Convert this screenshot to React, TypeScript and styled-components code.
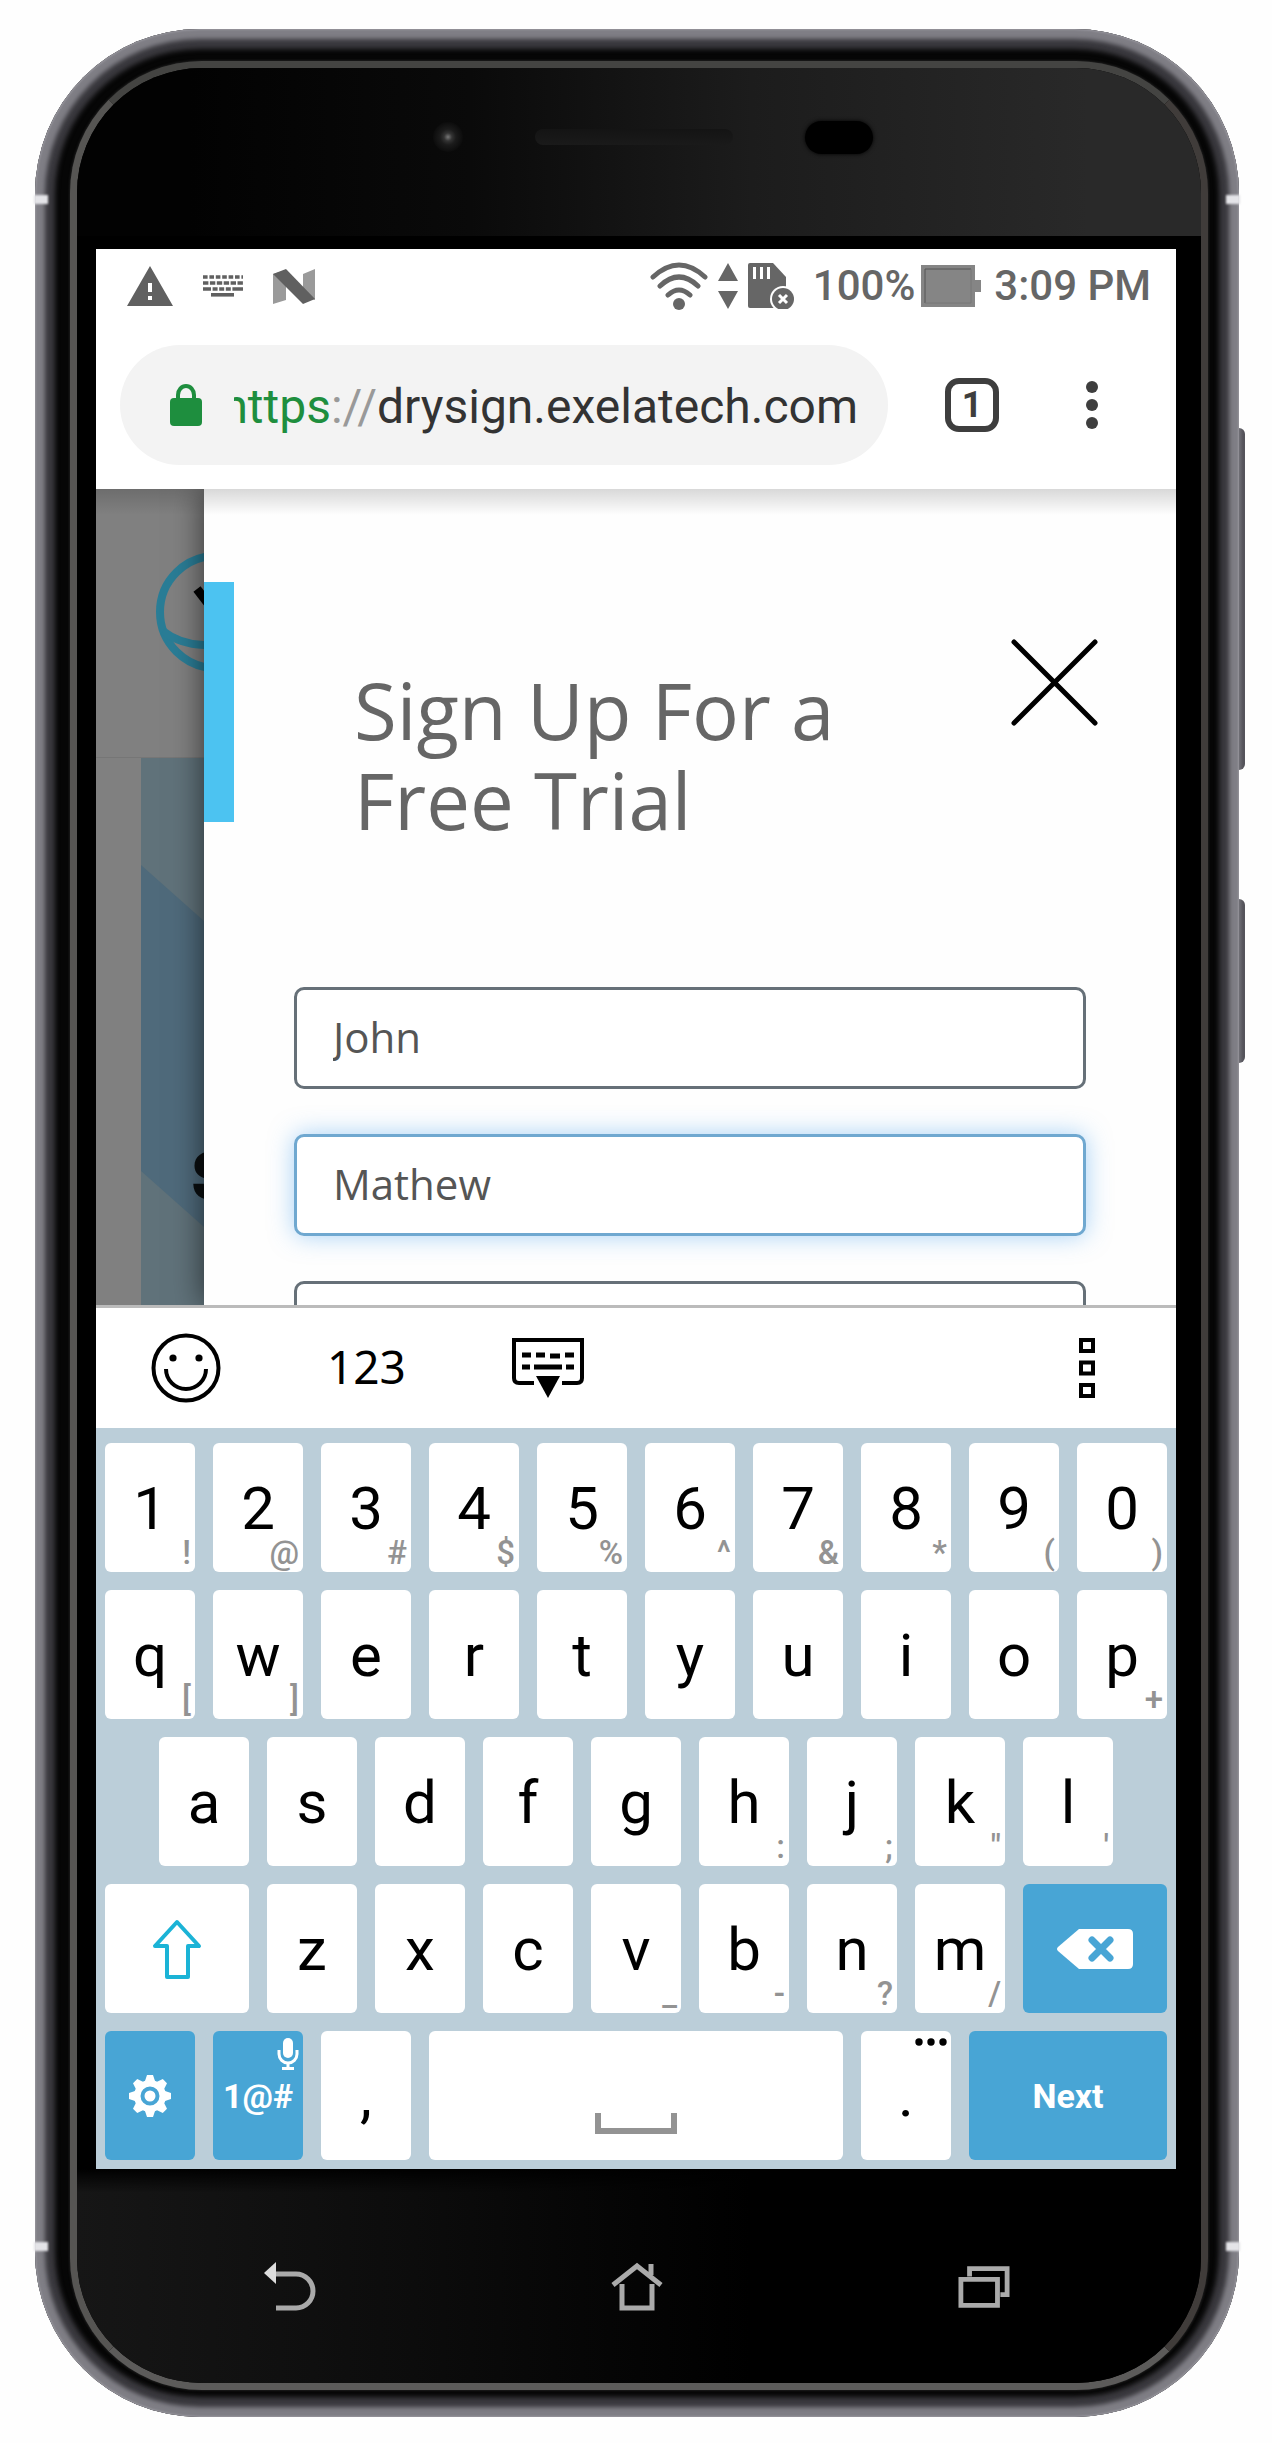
import React from "react";
import styled, { createGlobalStyle, css } from "styled-components";

const GlobalStyle = createGlobalStyle`
  *, *::before, *::after { box-sizing: border-box; }
  body { margin: 0; background: #fefefe; font-family: Roboto, "Liberation Sans", sans-serif; }
  button, input { font: inherit; margin: 0; }
  svg { display: block; }
`;

/* ---------- device shell ---------- */

const Page = styled.main`
  padding: 29px 33px 26px 35px;
`;

const Device = styled.div`
  position: relative;
  isolation: isolate;
`;

const SideButton = styled.span<{ $top: number; $length: number }>`
  position: absolute;
  z-index: -1;
  right: -6px;
  top: ${(p) => p.$top}px;
  width: 20px;
  height: ${(p) => p.$length}px;
  border-radius: 6px;
  background: linear-gradient(90deg, #9a9ba1 40%, #55545b 90%);
`;

const Antenna = styled.span<{ $side: "left" | "right"; $edge: "top" | "bottom" }>`
  position: absolute;
  ${(p) => p.$side}: -1px;
  ${(p) => p.$edge}: 166px;
  width: 14px;
  height: 9px;
  background: #e4e4e8;
  filter: blur(1px);
`;

const Metal = styled.div`
  padding: 32px 31px 27px 35px;
  border-radius: 165px;
  background: #060606;
  box-shadow: inset 0 0 2px 1px #98979e, inset 0 0 4px 10px #7f7e85,
    inset 0 0 5px 20px #3a393e;
`;

const Glass = styled.div`
  overflow: hidden;
  border: 7px solid;
  border-color: #444442 #403c3a #5c5b5a #565553;
  border-radius: 132px;
  background: #000;
  box-shadow: 0 0 3px #333;
`;

const TopBezel = styled.div`
  position: relative;
  display: flex;
  align-items: center;
  height: 168px;
  padding: 0 328px 30px 356px;
  background: linear-gradient(90deg, #020202 10%, #0a0a0a 35%, #1c1c1c 60%, #292929 90%);
`;

const Camera = styled.span`
  width: 30px;
  height: 30px;
  border-radius: 50%;
  background: radial-gradient(circle, #777 0, #333 4px, #1b1b1b 8px, #0c0c0c 15px);
`;

const Speaker = styled.span`
  flex: 1;
  height: 16px;
  margin: 0 72px;
  border-radius: 8px;
  background: linear-gradient(#141414, #1a1a1a);
`;

const Sensor = styled.span`
  width: 68px;
  height: 33px;
  border-radius: 17px;
  background: #000;
  box-shadow: 0 0 4px #000;
`;

const BottomBezel = styled.nav`
  display: flex;
  justify-content: center;
  gap: 295px;
  height: 214px;
  padding: 92px 4px 0 0;
  background: linear-gradient(#000 0, transparent 24px),
    linear-gradient(90deg, #161616, #0c0c0c 30%, #000 60%);
`;

const PlainButton = styled.button`
  display: flex;
  align-items: center;
  justify-content: center;
  padding: 0;
  border: 0;
  background: none;
  color: inherit;
`;

const NavButton = styled(PlainButton)`
  width: 52px;
  height: 52px;
  color: #aaa;
`;

const Screen = styled.div`
  margin: 13px 25px 0 19px;
  background: #fff;
`;

/* ---------- status and address bars ---------- */

const StatusBar = styled.div`
  display: flex;
  align-items: center;
  justify-content: space-between;
  height: 72px;
  padding: 2px 25px 0 31px;
  font-size: 42px;
  font-weight: 500;
  line-height: 48px;
  color: #666;
`;

const StatusGroup = styled.div<{ $gap: number }>`
  display: flex;
  align-items: center;
  gap: ${(p) => p.$gap}px;
`;

const BatteryLevel = styled.span`
  display: flex;
  align-items: center;
  gap: 6px;
  margin: 0 3px 0 9px;
`;

const AddressBar = styled.div`
  display: flex;
  align-items: center;
  height: 168px;
  padding: 24px 48px 24px 24px;
  color: #3e3e3e;
`;

const UrlPill = styled(PlainButton)`
  flex: 1;
  min-width: 0;
  justify-content: flex-start;
  gap: 32px;
  height: 120px;
  padding: 0 30px 0 50px;
  border-radius: 60px;
  background: #f3f3f3;
`;

const UrlText = styled.span`
  display: flex;
  flex: 1;
  min-width: 0;
  justify-content: flex-end;
  overflow: hidden;
  padding-top: 3px;
  font-size: 48px;
  line-height: 60px;
  color: #333;
`;

const Scheme = styled.span`
  color: #1e8e3e;
`;

const Slashes = styled.span`
  color: #999;
`;

const TabButton = styled(PlainButton)`
  width: 54px;
  height: 54px;
  margin: 0 57px;
  border: 6px solid #3e3e3e;
  border-radius: 14px;
  font-size: 36px;
  font-weight: 700;
  line-height: 42px;
`;

const MenuButton = styled(PlainButton)`
  width: 72px;
  height: 54px;
`;

/* ---------- web page ---------- */

const Viewport = styled.section`
  position: relative;
  display: flex;
  height: 816px;
  overflow: hidden;

  &::after {
    content: "";
    position: absolute;
    inset: 0 0 auto;
    z-index: 2;
    height: 26px;
    background: linear-gradient(rgba(0, 0, 0, 0.15), rgba(0, 0, 0, 0));
  }
`;

const DimmedPage = styled.div`
  width: 10%;
  overflow: hidden;
  background: #808080;
`;

const DimmedHeader = styled.div`
  height: 269px;
  padding: 62px 0 0 59px;
  border-bottom: 1px solid #767676;
`;

const DimmedHero = styled.div`
  position: relative;
  height: 547px;
  margin-left: 45px;
  padding: 382px 0 0 50px;
  background: #60727a;
  font-family: Inter, sans-serif;
  font-size: 64px;
  font-weight: 800;
  line-height: 72px;
  color: #0b0f11;

  &::before {
    content: "";
    position: absolute;
    inset: 107px 0 78px;
    background: #4f6a7b;
    clip-path: polygon(0 0, 100% 56px, 100% 100%, 0 calc(100% - 56px));
  }
`;

const HeroText = styled.span`
  position: relative;
`;

const Drawer = styled.div`
  position: relative;
  z-index: 1;
  flex: 1;
  padding-top: 93px;
  background: #fefefe;
  box-shadow: 0 0 30px rgba(0, 0, 0, 0.6);
`;

const DrawerHeader = styled.header`
  display: flex;
  align-items: flex-start;
  padding-right: 78px;
`;

const Accent = styled.span`
  width: 30px;
  height: 240px;
  background: #4cc3f1;
`;

const Title = styled.h1`
  flex: 1;
  margin: 83px 0 0 120px;
  font-family: "Open Sans", "Noto Sans", sans-serif;
  font-size: 78px;
  font-weight: 400;
  line-height: 90px;
  color: #666;
`;

const CloseButton = styled(PlainButton)`
  margin-top: 57px;
  color: #000;
`;

const Form = styled.form`
  display: grid;
  gap: 45px;
  margin: 142px 90px 0;
`;

const Field = styled.input<{ $active?: boolean }>`
  width: 100%;
  height: 102px;
  padding: 0 36px 4px;
  border: 3px solid #667078;
  border-radius: 10px;
  outline: 0;
  background: #fff;
  font-family: "Open Sans", "Noto Sans", sans-serif;
  font-size: 42px;
  color: #555;
  ${(p) =>
    p.$active &&
    css`
      border-color: #6fa8d0;
      box-shadow: 0 0 24px rgba(80, 165, 240, 0.5);
    `}
`;

/* ---------- keyboard ---------- */

const ToolRow = styled.div`
  display: flex;
  align-items: center;
  height: 123px;
  padding: 0 81px 0 55px;
  border-top: 3px solid #bbb;
  background: #fff;
  color: #000;
`;

const ToolButton = styled(PlainButton)<{ $push?: boolean }>`
  height: 72px;
  min-width: 70px;
  font-family: "Noto Sans", sans-serif;
  font-size: 46px;
  line-height: 60px;
  & + & {
    margin-left: 106px;
  }
  ${(p) =>
    p.$push &&
    css`
      && {
        min-width: 16px;
        margin-left: auto;
      }
    `}
`;

const ToolLabel = styled.span`
  padding-bottom: 4px;
`;

const Keyboard = styled.div`
  display: grid;
  gap: 18px;
  padding: 15px 0 9px;
  background: #bbced9;
`;

const KeyRow = styled.div<{ $indent?: boolean }>`
  display: grid;
  grid-template-columns: repeat(20, 1fr);
  ${(p) =>
    p.$indent &&
    css`
      & > :first-child {
        grid-column-start: 2;
      }
    `}
`;

const Key = styled(PlainButton)<{ $span?: number; $blue?: boolean }>`
  position: relative;
  grid-column-end: span ${(p) => p.$span ?? 2};
  min-width: 0;
  height: 129px;
  margin: 0 9px;
  border-radius: 6px;
  background: ${(p) => (p.$blue ? "#48a5d5" : "#fff")};
  color: ${(p) => (p.$blue ? "#fff" : "#000")};
  font-size: ${(p) => (p.$blue ? 34 : 60)}px;
  font-weight: ${(p) => (p.$blue ? 700 : 400)};
  line-height: 70px;
`;

const KeyLabel = styled.span`
  padding-top: 2px;
`;

const AltGlyph = styled.span`
  position: absolute;
  right: 4px;
  bottom: 0;
  font-size: 33px;
  font-weight: 500;
  line-height: 38px;
  color: #939393;
`;

const Corner = styled.span`
  position: absolute;
  top: 7px;
  right: 4px;
`;

/* ---------- icons ---------- */

const WarningIcon = () => (
  <svg width="46" height="40" viewBox="0 0 46 40" fill="#606060">
    <path fillRule="evenodd" d="M23 0 46 40H0ZM21 17v9h4v-9zM21 30v4h4v-4z" />
  </svg>
);

const TinyKeyboardIcon = () => (
  <svg width="40" height="22" viewBox="0 0 40 22" stroke="#606060" strokeWidth="3.6" fill="none">
    <path d="M0 2h40" strokeDasharray="4.6 1.8" />
    <path d="M0 8h40" strokeDasharray="5.4 1.5" />
    <path d="M0 14h40" strokeDasharray="8 1.6 5 1.6 5 1.6 5 1.6 10.6 0" />
    <path d="M8 19.8h23" />
  </svg>
);

const NougatIcon = () => (
  <svg width="42" height="35" viewBox="0 0 42 35">
    <path d="M0 5 13 1v30L0 35ZM30 5l12-5v31l-12-5Z" fill="#9a9a9a" />
    <path d="M0 5 13 0l29 30-12 5Z" fill="#606060" />
  </svg>
);

const WifiIcon = () => (
  <svg width="58" height="48" viewBox="0 0 58 48" fill="none" stroke="#666" strokeWidth="5" strokeLinecap="round">
    <path d="M3 15Q29-9 55 15M10 24Q29 6 48 24M18 33q11-10 22 0" />
    <circle cx="29" cy="42" r="6" fill="#666" stroke="none" />
  </svg>
);

const TrafficIcon = () => (
  <svg width="20" height="46" viewBox="0 0 20 46" fill="#666">
    <path d="m10 0 10 18H0ZM10 46 0 28h20Z" />
  </svg>
);

const SdCardIcon = () => (
  <svg width="46" height="46" viewBox="0 0 46 46">
    <path d="M2 0h23l13 14v31H2q-2 0-2-2V2q0-2 2-2Z" fill="#666" />
    <path d="M6.500 4v12M13.500 4v12M20.500 4v12" stroke="#fff" strokeWidth="3" />
    <circle cx="35" cy="36" r="13" fill="#fff" />
    <circle cx="35" cy="36" r="11" fill="#666" />
    <path d="m31 32 8 8M39 32l-8 8" stroke="#fff" strokeWidth="3" />
  </svg>
);

const BatteryIcon = () => (
  <svg width="60" height="42" viewBox="0 0 60 42">
    <path d="M0 0h54v15h6v12h-6v15H0Z" fill="#858585" />
    <path d="M4 38V4h46" fill="none" stroke="#555" />
    <path d="M4 38h46V4" fill="none" stroke="#777" />
  </svg>
);

const LockIcon = () => (
  <svg width="32" height="42" viewBox="0 0 32 42">
    <path d="M8 16V11a8 9 0 0 1 16 0v5" fill="none" stroke="#1e8e3e" strokeWidth="4" />
    <rect y="14" width="32" height="28" rx="4" fill="#1e8e3e" />
  </svg>
);

const DotsIcon = () => (
  <svg width="12" height="48" viewBox="0 0 12 48" fill="#3e3e3e">
    <circle cx="6" cy="6" r="6" />
    <circle cx="6" cy="24" r="6" />
    <circle cx="6" cy="42" r="6" />
  </svg>
);

const BrandIcon = () => (
  <svg width="122" height="122" viewBox="0 0 122 122" fill="none" stroke="#2a7d96" strokeWidth="8">
    <circle cx="61" cy="61" r="56" />
    <path d="M8 80q20 16 53 14" />
    <path d="m42 38 20 26" stroke="#000" strokeWidth="9" />
  </svg>
);

const CloseIcon = () => (
  <svg width="87" height="87" viewBox="0 0 87 87" stroke="currentColor" strokeWidth="5" strokeLinecap="round">
    <path d="m3 3 81 81M84 3 3 84" />
  </svg>
);

const SmileIcon = () => (
  <svg width="70" height="70" viewBox="0 0 70 70" fill="none" stroke="#000" strokeWidth="4">
    <circle cx="35" cy="35" r="32.500" />
    <circle cx="22" cy="25" r="3.600" fill="#000" stroke="none" />
    <circle cx="48" cy="25" r="3.600" fill="#000" stroke="none" />
    <path d="M15 36a20 20 0 0 0 40 0" />
  </svg>
);

const HideKeyboardIcon = () => (
  <svg width="72" height="60" viewBox="0 0 72 60" fill="none" stroke="#000" strokeWidth="4">
    <path d="M22 45H7q-5 0-5-5V2h68v38q0 5-5 5H50" />
    <path d="M10 17h9M24 17h9M38 18h10M53 17h9M10 29h8M22 29h28M54 29h8" strokeWidth="5" />
    <path d="M24 38h24L36 60Z" fill="#000" stroke="none" />
  </svg>
);

const SquaresIcon = () => (
  <svg width="16" height="60" viewBox="0 0 16 60" fill="none" stroke="#000" strokeWidth="4">
    <path d="M2 2h12v11H2zM2 24.500h12v11H2zM2 47h12v11H2z" />
  </svg>
);

const ShiftIcon = () => (
  <svg width="50" height="60" viewBox="0 0 50 60" fill="none" stroke="#1bb3d6" strokeWidth="4" strokeLinejoin="round">
    <path d="M25 3 47 27H36v31H15V27H3Z" />
  </svg>
);

const BackspaceIcon = () => (
  <svg width="76" height="40" viewBox="0 0 76 40">
    <path d="M22 0h49q5 0 5 5v30q0 5-5 5H22L1 22q-2-2 0-4Z" fill="#fff" />
    <path d="m35 11 18 18M53 11 35 29" stroke="#48a5d5" strokeWidth="7" strokeLinecap="round" />
  </svg>
);

const GearIcon = () => (
  <svg width="42" height="42" viewBox="-21 -21 42 42">
    {[0, 45, 90, 135].map((angle) => (
      <path key={angle} d="M-5-15-3-21H3L5-15V15L3 21H-3L-5 15Z" fill="#fff" transform={`rotate(${angle})`} />
    ))}
    <circle r="16" fill="#fff" />
    <circle r="7.500" fill="#fff" stroke="#48a5d5" strokeWidth="4" />
  </svg>
);

const MicIcon = () => (
  <svg width="22" height="32" viewBox="0 0 22 32" fill="none" stroke="#fff">
    <rect x="6" width="10" height="20" rx="5" fill="#fff" stroke="none" />
    <path d="M2 12v4a9 9 0 0 0 18 0v-4" strokeWidth="3" />
    <path d="M11 25v5M5 30.500h12" strokeWidth="3" />
  </svg>
);

const MoreIcon = () => (
  <svg width="32" height="8" viewBox="0 0 32 8" fill="#000">
    <circle cx="4" cy="4" r="3.700" />
    <circle cx="16" cy="4" r="3.700" />
    <circle cx="28" cy="4" r="3.700" />
  </svg>
);

const SpaceIcon = () => (
  <svg width="82" height="77" viewBox="0 0 82 77" fill="none" stroke="#939393" strokeWidth="6">
    <path d="M3 56v18h76V56" />
  </svg>
);

const BackIcon = () => (
  <svg width="52" height="50" viewBox="0 0 52 50" fill="none" stroke="currentColor" strokeWidth="5">
    <path d="M8 12h24a17 17 0 0 1 0 34H12" />
    <path d="M12 0v22L0 11Z" fill="#ddd" stroke="none" />
  </svg>
);

const HomeIcon = () => (
  <svg width="52" height="50" viewBox="0 0 52 50" fill="none" stroke="currentColor" strokeWidth="5">
    <path d="M2 23 26 4l24 19M40 13V2M11 22v24h30V22" />
  </svg>
);

const RecentsIcon = () => (
  <svg width="54" height="46" viewBox="0 0 54 46" fill="none" stroke="currentColor" strokeWidth="5">
    <path d="M3 15h38v27H3zM12 12V4h39v27h-7" />
  </svg>
);

/* ---------- key data ---------- */

type KeyDef = [label: string, alt?: string];

const numberKeys: KeyDef[] = [
  ["1", "!"], ["2", "@"], ["3", "#"], ["4", "$"], ["5", "%"],
  ["6", "^"], ["7", "&"], ["8", "*"], ["9", "("], ["0", ")"],
];
const upperKeys: KeyDef[] = [
  ["q", "["], ["w", "]"], ["e"], ["r"], ["t"], ["y"], ["u"], ["i"], ["o"], ["p", "+"],
];
const homeKeys: KeyDef[] = [
  ["a"], ["s"], ["d"], ["f"], ["g"], ["h", ":"], ["j", ";"], ["k", '"'], ["l", "'"],
];
const lowerKeys: KeyDef[] = [
  ["z"], ["x"], ["c"], ["v", "_"], ["b", "-"], ["n", "?"], ["m", "/"],
];

const renderKeys = (keys: KeyDef[]) =>
  keys.map(([label, alt]) => (
    <Key type="button" key={label}>
      <KeyLabel>{label}</KeyLabel>
      {alt && <AltGlyph>{alt}</AltGlyph>}
    </Key>
  ));

export default function App() {
  return (
    <Page>
      <GlobalStyle />
      <Device>
        <SideButton $top={399} $length={342} />
        <SideButton $top={870} $length={164} />
        <Metal>
          <Glass>
            <TopBezel>
              <Camera />
              <Speaker />
              <Sensor />
            </TopBezel>

            <Screen>
              <StatusBar>
                <StatusGroup $gap={30}>
                  <WarningIcon />
                  <TinyKeyboardIcon />
                  <NougatIcon />
                </StatusGroup>
                <StatusGroup $gap={10}>
                  <WifiIcon />
                  <TrafficIcon />
                  <SdCardIcon />
                  <BatteryLevel>
                    100%
                    <BatteryIcon />
                  </BatteryLevel>
                  <span>3:09 PM</span>
                </StatusGroup>
              </StatusBar>

              <AddressBar>
                <UrlPill type="button">
                  <LockIcon />
                  <UrlText>
                    <Scheme>https</Scheme>
                    <Slashes>://</Slashes>
                    <span>drysign.exelatech.com</span>
                  </UrlText>
                </UrlPill>
                <TabButton type="button">1</TabButton>
                <MenuButton type="button" aria-label="Menu">
                  <DotsIcon />
                </MenuButton>
              </AddressBar>

              <Viewport>
                <DimmedPage>
                  <DimmedHeader>
                    <BrandIcon />
                  </DimmedHeader>
                  <DimmedHero>
                    <HeroText>S</HeroText>
                  </DimmedHero>
                </DimmedPage>
                <Drawer>
                  <DrawerHeader>
                    <Accent />
                    <Title>
                      Sign Up For a<br />
                      Free Trial
                    </Title>
                    <CloseButton type="button" aria-label="Close">
                      <CloseIcon />
                    </CloseButton>
                  </DrawerHeader>
                  <Form>
                    <Field type="text" aria-label="First name" defaultValue="John" />
                    <Field type="text" aria-label="Last name" defaultValue="Mathew" $active />
                    <Field type="email" aria-label="Email" />
                  </Form>
                </Drawer>
              </Viewport>

              <ToolRow>
                <ToolButton type="button" aria-label="Emoji">
                  <SmileIcon />
                </ToolButton>
                <ToolButton type="button">
                  <ToolLabel>123</ToolLabel>
                </ToolButton>
                <ToolButton type="button" aria-label="Hide keyboard">
                  <HideKeyboardIcon />
                </ToolButton>
                <ToolButton type="button" aria-label="More tools" $push>
                  <SquaresIcon />
                </ToolButton>
              </ToolRow>

              <Keyboard>
                <KeyRow>{renderKeys(numberKeys)}</KeyRow>
                <KeyRow>{renderKeys(upperKeys)}</KeyRow>
                <KeyRow $indent>{renderKeys(homeKeys)}</KeyRow>
                <KeyRow>
                  <Key type="button" $span={3} aria-label="Shift">
                    <ShiftIcon />
                  </Key>
                  {renderKeys(lowerKeys)}
                  <Key type="button" $span={3} $blue aria-label="Backspace">
                    <BackspaceIcon />
                  </Key>
                </KeyRow>
                <KeyRow>
                  <Key type="button" $blue aria-label="Settings">
                    <GearIcon />
                  </Key>
                  <Key type="button" $blue>
                    1@#
                    <Corner>
                      <MicIcon />
                    </Corner>
                  </Key>
                  <Key type="button">,</Key>
                  <Key type="button" $span={8} aria-label="Space">
                    <SpaceIcon />
                  </Key>
                  <Key type="button">
                    .
                    <Corner>
                      <MoreIcon />
                    </Corner>
                  </Key>
                  <Key type="button" $span={4} $blue>
                    Next
                  </Key>
                </KeyRow>
              </Keyboard>
            </Screen>

            <BottomBezel>
              <NavButton type="button" aria-label="Back">
                <BackIcon />
              </NavButton>
              <NavButton type="button" aria-label="Home">
                <HomeIcon />
              </NavButton>
              <NavButton type="button" aria-label="Recent apps">
                <RecentsIcon />
              </NavButton>
            </BottomBezel>
          </Glass>
        </Metal>
        <Antenna $side="left" $edge="top" />
        <Antenna $side="right" $edge="top" />
        <Antenna $side="left" $edge="bottom" />
        <Antenna $side="right" $edge="bottom" />
      </Device>
    </Page>
  );
}
